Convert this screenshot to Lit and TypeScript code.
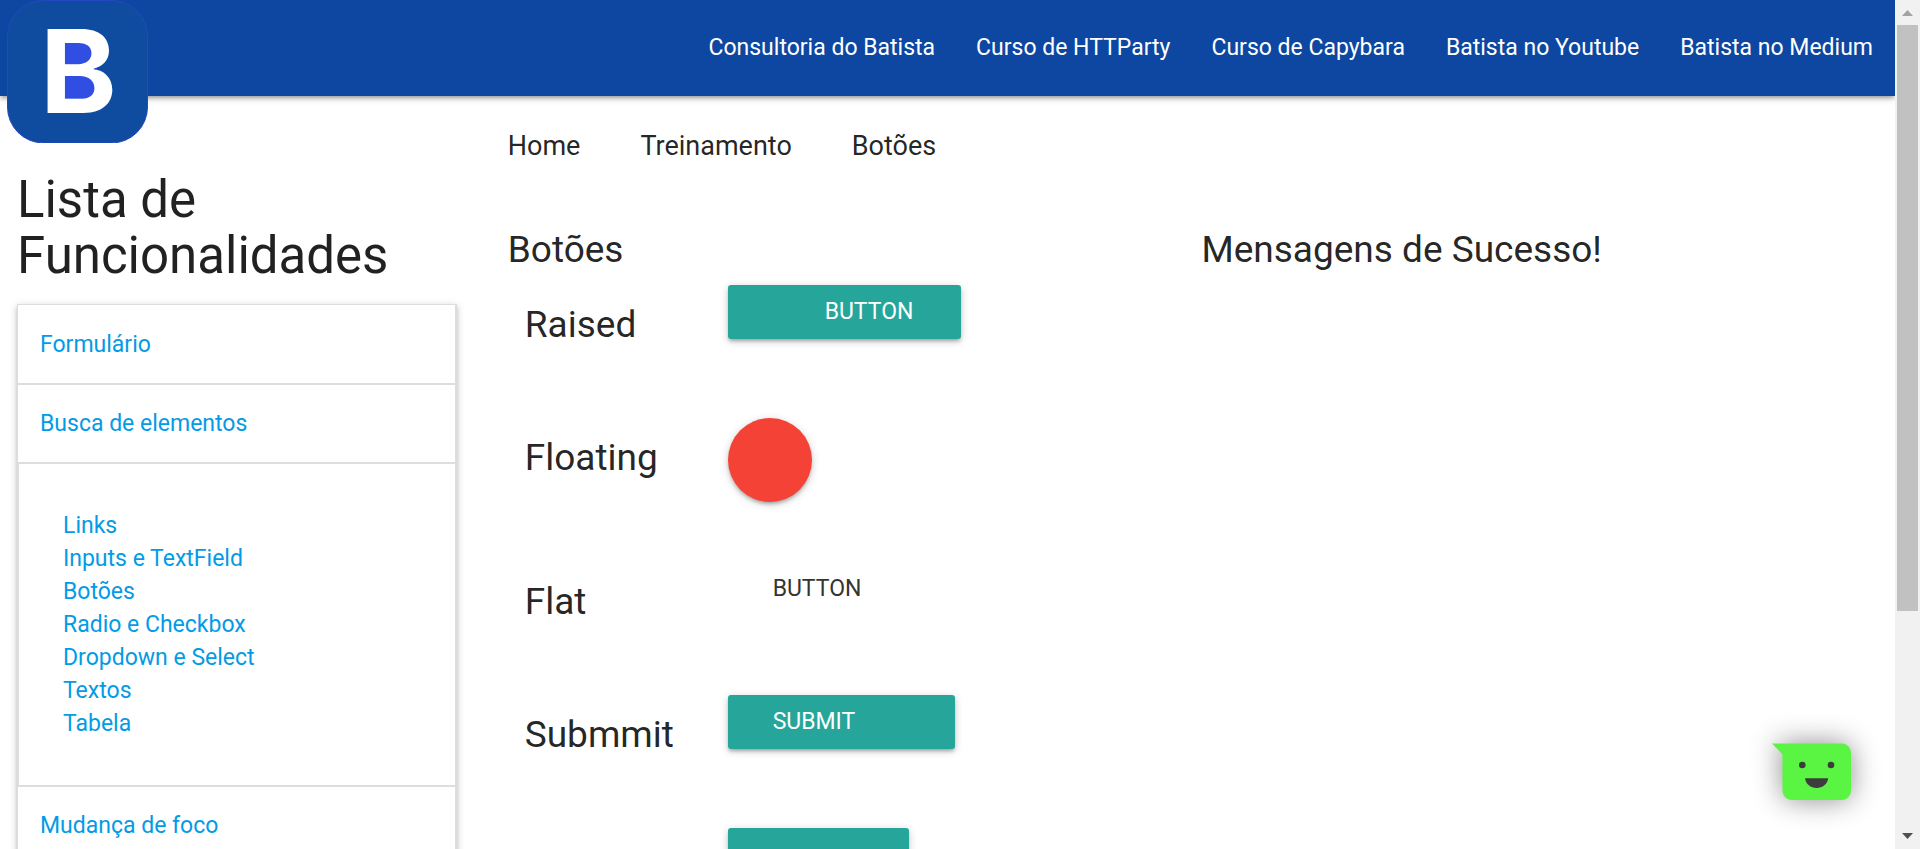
import { LitElement, html, css, svg } from "lit";
import { customElement } from "lit/decorators.js";

const NAV_LINKS = [
  "Consultoria do Batista",
  "Curso de HTTParty",
  "Curso de Capybara",
  "Batista no Youtube",
  "Batista no Medium",
];

const SEARCH_LINKS = [
  "Links",
  "Inputs e TextField",
  "Botões",
  "Radio e Checkbox",
  "Dropdown e Select",
  "Textos",
  "Tabela",
];

const CRUMBS = ["Home", "Treinamento", "Botões"];

@customElement("top-nav")
class TopNav extends LitElement {
  static styles = css`
    :host {
      display: block;
    }
    .bar {
      display: flex;
      justify-content: space-between;
      align-items: flex-start;
      height: 96px;
      background: #0d47a1;
      box-shadow: 0 3px 3px rgba(0, 0, 0, 0.14),
        0 4px 2px -3px rgba(0, 0, 0, 0.12), 0 2px 8px rgba(0, 0, 0, 0.2);
    }
    .logo {
      display: block;
      margin-left: 7px;
    }
    .logo-svg {
      display: block;
      width: 141px;
      height: 143px;
    }
    .logo-letter {
      font: 700 116px Inter, sans-serif;
      fill: #fff;
    }
    .links {
      display: flex;
      gap: 41px;
      list-style: none;
      margin: 0;
      padding: 0 22px;
    }
    .link {
      display: block;
      line-height: 96px;
      font-size: 23px;
      color: #fff;
      text-decoration: none;
      white-space: nowrap;
    }
  `;

  render() {
    return html`
      <nav class="bar">
        <a class="logo" href="#" aria-label="Batista">
          <svg class="logo-svg" viewBox="0 0 141 143">
            ${svg`
              <rect x="0.5" y="0.5" width="140" height="142.5" rx="36" fill="#0f4c9f" stroke="#2547c4"/>
              <rect x="54" y="38" width="36" height="66" fill="#304fe2"/>
              <text class="logo-letter" x="33" y="113">B</text>
            `}
          </svg>
        </a>
        <ul class="links">
          ${NAV_LINKS.map((t) => html`<li><a class="link" href="#">${t}</a></li>`)}
        </ul>
      </nav>
    `;
  }
}

@customElement("side-menu")
class SideMenu extends LitElement {
  static styles = css`
    :host {
      display: block;
    }
    .title {
      margin: 0 0 20px;
      font-size: 51px;
      line-height: 56px;
      font-weight: 400;
    }
    .list {
      list-style: none;
      margin: 0;
      padding: 1px 0 0;
      border: 1px solid #ddd;
      border-right-width: 2px;
      font-size: 23px;
      line-height: 33px;
      box-shadow: 0 3px 3px rgba(0, 0, 0, 0.14),
        0 4px 2px -3px rgba(0, 0, 0, 0.12), 0 2px 8px rgba(0, 0, 0, 0.2);
    }
    .header {
      padding: 22px;
      border-bottom: 2px solid #ddd;
    }
    .body {
      list-style: none;
      margin: 0;
      padding: 45px 44px;
      border-left: 1px solid #ddd;
      border-bottom: 2px solid #ddd;
    }
    .link {
      display: block;
      color: #039be5;
      text-decoration: none;
    }
  `;

  render() {
    return html`
      <h4 class="title">Lista de Funcionalidades</h4>
      <ul class="list">
        <li class="header"><a class="link" href="#">Formulário</a></li>
        <li>
          <div class="header"><a class="link" href="#">Busca de elementos</a></div>
          <ul class="body">
            ${SEARCH_LINKS.map((t) => html`<li><a class="link" href="#">${t}</a></li>`)}
          </ul>
        </li>
        <li class="header"><a class="link" href="#">Mudança de foco</a></li>
      </ul>
    `;
  }
}

@customElement("button-samples")
class ButtonSamples extends LitElement {
  static styles = css`
    :host {
      display: block;
    }
    .row {
      display: grid;
      grid-template-columns: 1fr 2fr;
      align-items: start;
      min-height: 133px;
    }
    .row-tall {
      min-height: 144px;
    }
    .label {
      margin: 19px 0 0 17px;
      font-size: 37px;
      line-height: 41px;
      font-weight: 400;
    }
    .btn {
      display: inline-flex;
      justify-self: start;
      align-items: center;
      height: 54px;
      padding: 0 48px 2px 45px;
      border: 0;
      border-radius: 3px;
      background: #26a69a;
      color: #fff;
      font: 400 23px Roboto, sans-serif;
      text-transform: uppercase;
      box-shadow: 0 3px 3px rgba(0, 0, 0, 0.14),
        0 4px 2px -3px rgba(0, 0, 0, 0.12), 0 2px 8px rgba(0, 0, 0, 0.2);
    }
    .slot {
      width: 52px;
    }
    .flat {
      background: transparent;
      box-shadow: none;
      color: #343434;
    }
    .floating {
      width: 84px;
      height: 84px;
      padding: 0;
      border-radius: 50%;
      background: #f44336;
    }
    .blank {
      width: 181px;
    }
  `;

  render() {
    return html`
      <div class="row">
        <h5 class="label">Raised</h5>
        <button class="btn"><span class="slot"></span>Button</button>
      </div>
      <div class="row row-tall">
        <h5 class="label">Floating</h5>
        <button class="btn floating" aria-label="Floating"></button>
      </div>
      <div class="row">
        <h5 class="label">Flat</h5>
        <button class="btn flat">Button</button>
      </div>
      <div class="row">
        <h5 class="label">Submmit</h5>
        <button class="btn" type="submit">Submit<span class="slot"></span></button>
      </div>
      <div class="row">
        <span></span>
        <button class="btn blank" aria-label="Button"></button>
      </div>
    `;
  }
}

@customElement("app-root")
class AppRoot extends LitElement {
  static styles = css`
    :host {
      display: grid;
      grid-template-columns: minmax(0, 1fr) 25px;
      height: 100vh;
      overflow: hidden;
      background: #fff;
      color: rgba(0, 0, 0, 0.87);
      font-family: Roboto, sans-serif;
    }
    .page {
      height: 100vh;
      overflow: hidden;
    }
    .columns {
      display: grid;
      grid-template-columns: 1fr 3fr;
    }
    .side {
      padding: 76px 17px 0;
    }
    .main {
      padding: 0 17px;
    }
    .crumbs {
      display: flex;
      gap: 60px;
      padding: 32px 17px 0;
      font-size: 27px;
      line-height: 36px;
    }
    .crumb {
      color: inherit;
      text-decoration: none;
    }
    .halves {
      display: grid;
      grid-template-columns: 1fr 1fr;
      margin-top: 65px;
    }
    .half {
      padding: 0 17px;
    }
    .heading {
      margin: 0 0 15px;
      font-size: 37px;
      line-height: 41px;
      font-weight: 400;
    }
    .scroll {
      display: flex;
      flex-direction: column;
      align-items: center;
      justify-content: space-between;
      background: #f1f1f1;
    }
    .arrow {
      display: block;
      width: 25px;
      height: 25px;
    }
    .track {
      flex: 1;
      width: 21px;
    }
    .thumb {
      height: 73.3%;
      background: #c1c1c1;
    }
    .chat {
      position: fixed;
      right: 68px;
      bottom: 48px;
      padding: 0;
      border: 0;
      background: none;
    }
    .chat-svg {
      display: block;
      width: 80px;
      height: 58px;
      overflow: visible;
      filter: drop-shadow(0 0 14px rgba(0, 0, 0, 0.45));
    }
  `;

  render() {
    return html`
      <div class="page">
        <top-nav></top-nav>
        <div class="columns">
          <aside class="side"><side-menu></side-menu></aside>
          <main class="main">
            <nav class="crumbs">
              ${CRUMBS.map((t) => html`<a class="crumb" href="#">${t}</a>`)}
            </nav>
            <div class="halves">
              <section class="half">
                <h5 class="heading">Botões</h5>
                <button-samples></button-samples>
              </section>
              <section class="half">
                <h5 class="heading">Mensagens de Sucesso!</h5>
              </section>
            </div>
          </main>
        </div>
      </div>
      <div class="scroll" aria-hidden="true">
        <svg class="arrow" viewBox="0 0 25 25"><path d="M7 16 12.5 10 18 16z" fill="#a3a3a3" /></svg>
        <div class="track"><div class="thumb"></div></div>
        <svg class="arrow" viewBox="0 0 25 25"><path d="M7 9 12.5 15 18 9z" fill="#505050" /></svg>
      </div>
      <button class="chat" aria-label="Chat">
        <svg class="chat-svg" viewBox="0 0 80 58">
          <path d="M0 .5H70a9 9 0 0 1 9 9V48a9 9 0 0 1-9 9H19.500a9 9 0 0 1-9-9V11.500z" fill="#5af542" />
          <circle cx="30.300" cy="22" r="3.300" fill="#3c3c3c" />
          <circle cx="59" cy="22" r="3.300" fill="#3c3c3c" />
          <path d="M33 35.200H56.200C55.500 41 50.500 45 44.600 45S33.700 41 33 35.200z" fill="#3c3c3c" />
        </svg>
      </button>
    `;
  }
}
